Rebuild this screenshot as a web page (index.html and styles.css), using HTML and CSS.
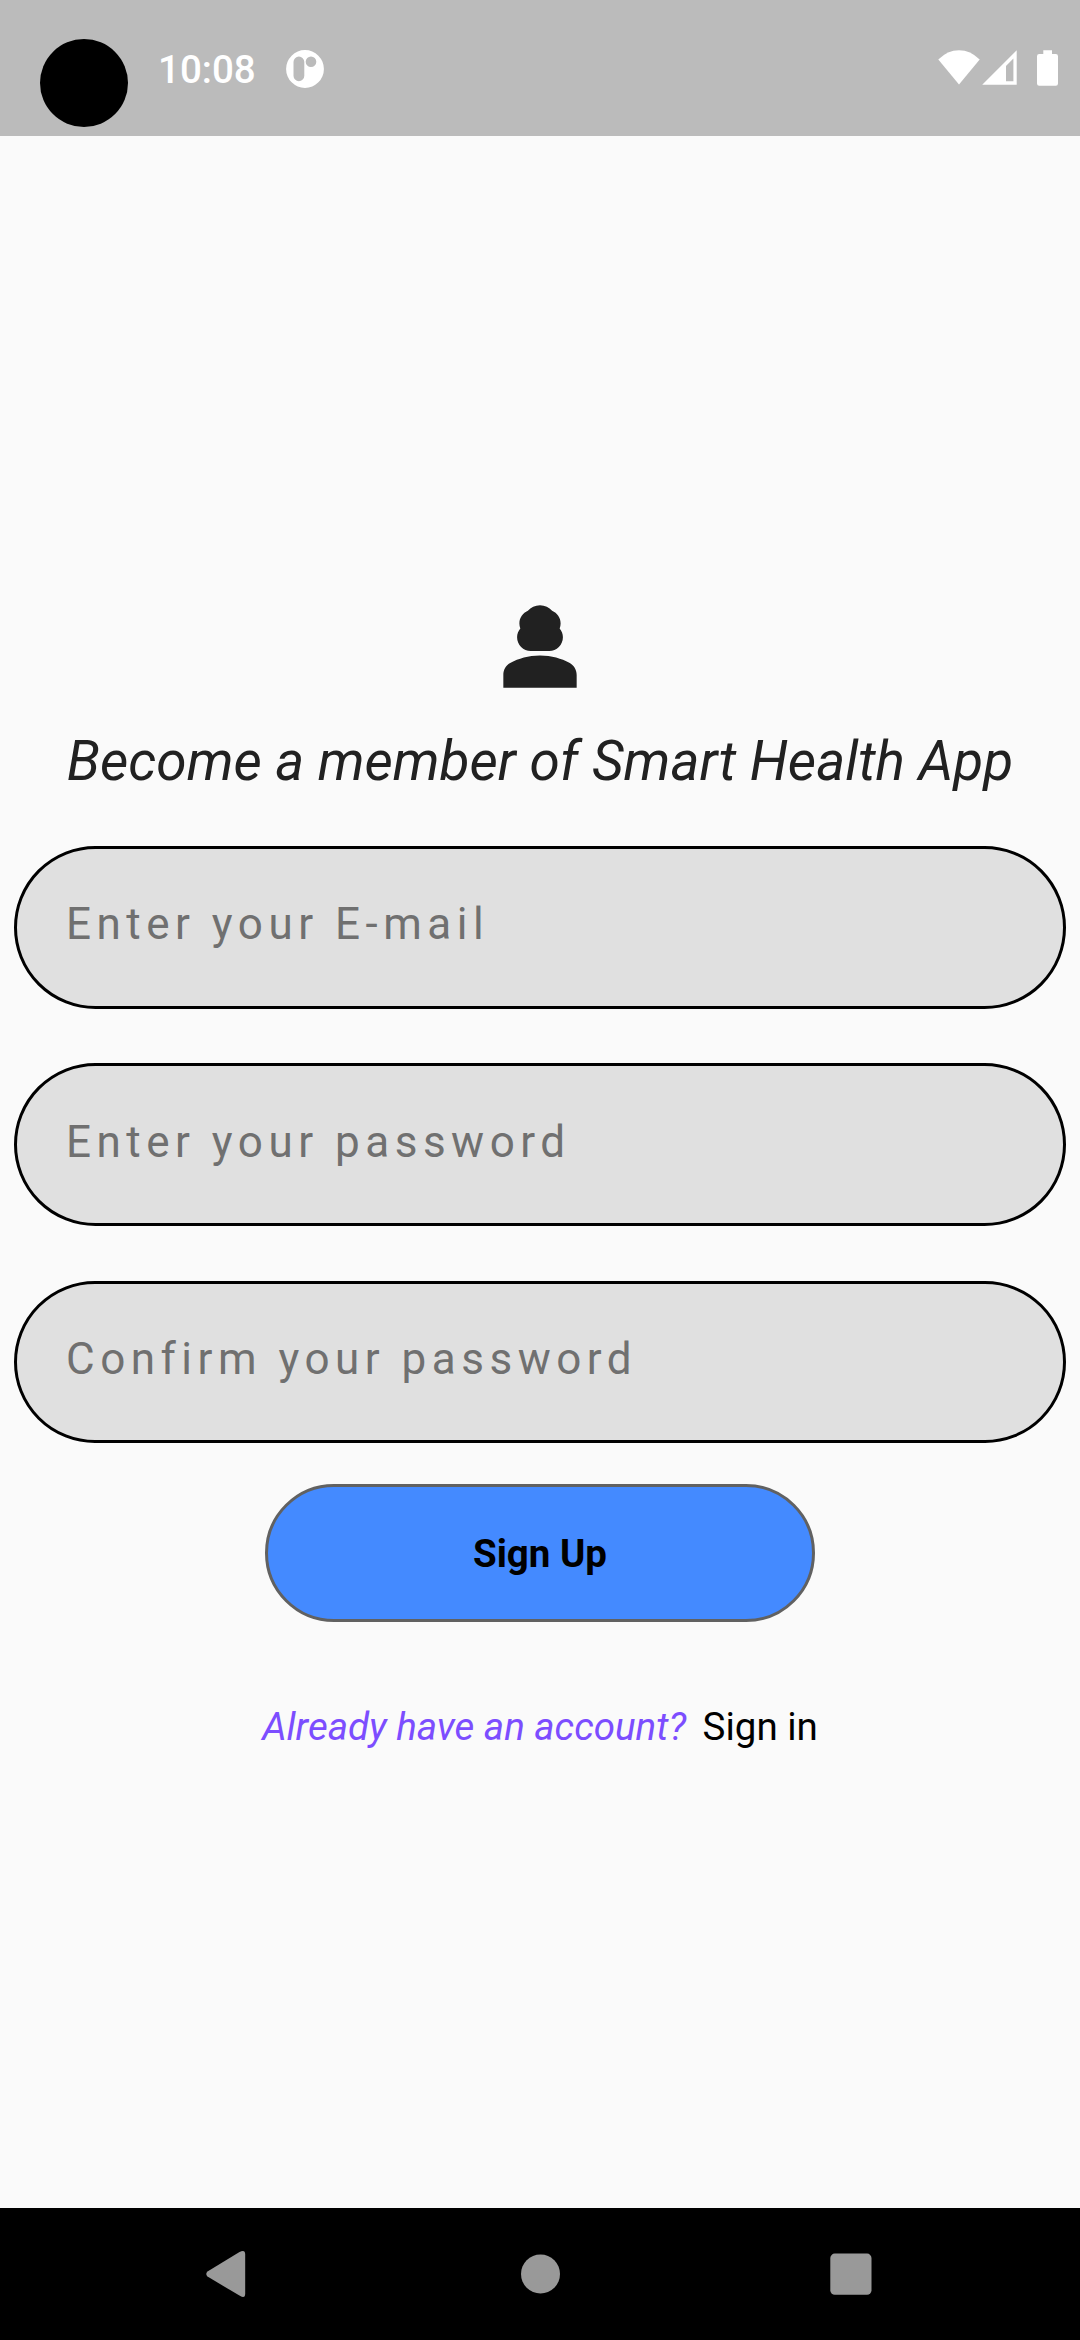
FILE: index.html
```html
<!DOCTYPE html>
<html lang="en">
<head>
<meta charset="utf-8">
<title>Smart Health App – Sign Up</title>
<link rel="stylesheet" href="styles.css">
</head>
<body>
<div class="screen">
  <header class="status-bar">
    <div class="camera"></div>
    <span class="clock">10:08</span>
    <svg class="status-app" viewBox="0 0 38 38">
      <path fill="#fff" fill-rule="evenodd" d="M19 0.1a18.9 18.9 0 1 1 0 37.8a18.9 18.9 0 1 1 0-37.8zM12.9 6.6a5.4 5.4 0 0 0-5.4 5.4v13.8a5.4 5.4 0 0 0 10.8 0V12a5.4 5.4 0 0 0-5.4-5.4zM25 6.5a5.3 5.3 0 1 0 0 10.6a5.3 5.3 0 1 0 0-10.6z"/>
    </svg>
    <div class="status-icons">
      <svg class="wifi" viewBox="0 0 42 35"><path fill="#fff" d="M21 34.4L0.3 9.6Q9.5 0.3 21 0.3T41.7 9.6z"/></svg>
      <svg class="signal" viewBox="0 0 35 35"><path fill="#fff" fill-rule="evenodd" d="M34.7 0.2V34.7H0.2zM31.4 8.6L24 16V31.2H31.4z"/></svg>
      <svg class="battery" viewBox="0 0 21 36"><path fill="#fff" d="M6.3 0.2H15V4H18.8Q21 4 21 6.2V33.5Q21 35.7 18.8 35.7H2.2Q0 35.7 0 33.5V6.2Q0 4 2.2 4H6.3z"/></svg>
    </div>
  </header>

  <main class="content">
    <svg class="avatar" viewBox="0 0 24 24">
      <path fill="#212121" d="M18.39,14.56C16.71,13.7,14.53,13,12,13s-4.71,0.7-6.39,1.56C4.61,15.07,4,16.1,4,17.22V20h16v-2.78C20,16.1,19.39,15.07,18.39,14.56z"/>
      <path fill="#212121" d="M10,12h4c1.66,0,3-1.34,3-3c0-0.73-0.27-1.4-0.71-1.92C16.42,6.75,16.5,6.38,16.5,6c0-1.25-0.77-2.32-1.86-2.77C14,2.48,13.06,2,12,2S10,2.48,9.36,3.23C8.27,3.68,7.5,4.75,7.5,6c0,0.38,0.08,0.75,0.21,1.08C7.27,7.6,7,8.27,7,9C7,10.66,8.34,12,10,12z"/>
    </svg>
    <h1 class="title">Become a member of Smart Health App</h1>
    <form class="form">
      <div class="field">Enter your E-mail</div>
      <div class="field">Enter your password</div>
      <div class="field">Confirm your password</div>
      <button class="submit" type="button">Sign Up</button>
    </form>
    <p class="footer"><span class="question">Already have an account?</span><span class="link">Sign in</span></p>
  </main>

  <nav class="nav-bar">
    <svg class="nav-icon" viewBox="3 0 46 46"><path fill="#999" d="M36.5 1.1Q42.2 -1.8 42.2 3.5V42.5Q42.2 47.8 37.3 45.1L4.5 25.6Q2 23 4.5 20.4z"/></svg>
    <svg class="nav-icon" viewBox="0 0 46 46"><circle cx="23.5" cy="23" r="19.5" fill="#999"/></svg>
    <svg class="nav-icon" viewBox="0 0 46 46"><rect x="2.3" y="2.6" width="41.2" height="41.2" rx="4.5" fill="#999"/></svg>
  </nav>
</div>
</body>
</html>
```
FILE: styles.css
```css
* {
  box-sizing: border-box;
}

body {
  margin: 0;
  font-family: Roboto, sans-serif;
  background: #fafafa;
}

svg {
  display: block;
  flex: none;
  overflow: visible;
}

.screen {
  display: flex;
  flex-direction: column;
  width: 1080px;
  height: 2340px;
  overflow: hidden;
}

/* Status bar */
.status-bar {
  display: flex;
  align-items: flex-start;
  height: 136px;
  padding: 0 22px 0 40px;
  background: #bbbbbb;
}

.camera {
  width: 88px;
  height: 88px;
  margin-top: 39px;
  border-radius: 50%;
  background: #000;
}

.clock {
  width: 98px;
  margin: 47px 0 0 30px;
  font-size: 38.5px;
  font-weight: 500;
  line-height: 46px;
  color: #fff;
}

.status-app {
  width: 38px;
  height: 38px;
  margin: 49.5px 0 0 30.4px;
}

.status-icons {
  display: flex;
  align-items: flex-start;
  margin: 50px 0 0 auto;
}

.wifi {
  width: 42px;
  height: 35px;
}

.signal {
  width: 35px;
  height: 35px;
  margin-left: 2.5px;
}

.battery {
  width: 21px;
  height: 36px;
  margin-left: 20px;
}

/* Sign-up form */
.content {
  display: flex;
  flex: 1;
  flex-direction: column;
  align-items: center;
  padding: 460px 14px 0;
}

.avatar {
  width: 110px;
  height: 110px;
}

.title {
  margin: 23px 0 0;
  font-size: 55px;
  font-style: italic;
  font-weight: 400;
  line-height: 64px;
  color: #212121;
  white-space: nowrap;
}

.form {
  display: flex;
  flex-direction: column;
  align-items: center;
  align-self: stretch;
  gap: 54.5px;
  margin-top: 53px;
}

.field {
  width: 100%;
  height: 162.75px;
  padding: 49.3px 49px 0;
  border: 3px solid #000;
  border-radius: 82px;
  background: #e0e0e0;
  font-size: 44px;
  line-height: 52px;
  letter-spacing: 5.5px;
  color: #707070;
}

.submit {
  width: 550px;
  height: 138px;
  margin-top: -14px;
  padding: 2px 0 0;
  border: 3px solid #616161;
  border-radius: 69px;
  background: #448aff;
  font: bold 38.5px/46px Roboto, sans-serif;
  color: #000;
}

.footer {
  display: flex;
  gap: 16.5px;
  margin: 82px 0 0;
  font-size: 38.5px;
  line-height: 46px;
  color: #000;
}

.question {
  font-style: italic;
  color: #7c4dff;
}

/* System navigation */
.nav-bar {
  display: flex;
  align-items: center;
  justify-content: space-between;
  height: 132px;
  padding: 0 206px;
  background: #000;
}

.nav-icon {
  width: 46px;
  height: 46px;
}
```
